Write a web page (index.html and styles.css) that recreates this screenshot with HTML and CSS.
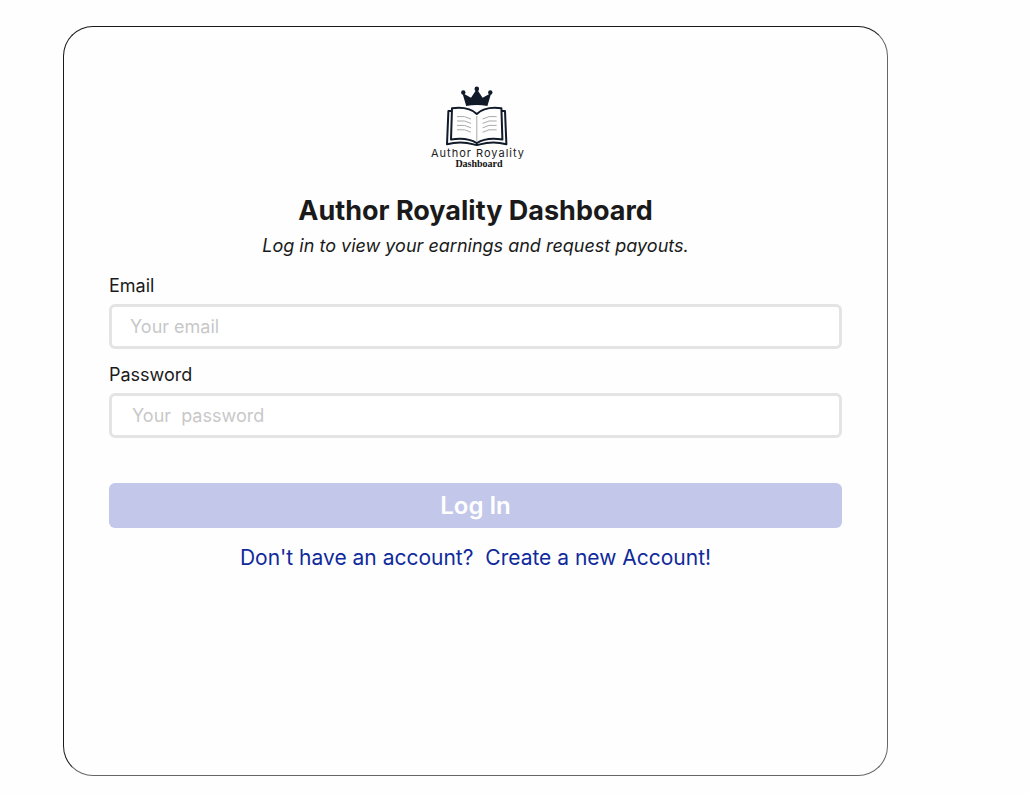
FILE: index.html
```html
<!DOCTYPE html>
<html lang="en">
  <head>
    <meta charset="utf-8" />
    <meta name="viewport" content="width=device-width, initial-scale=1" />
    <title>Author Royality Dashboard</title>
    <link rel="stylesheet" href="styles.css">
  </head>
  <body>
    <main class="login">
      <svg class="login__logo" viewBox="1 0 100 100" role="img" aria-label="Author Royality Dashboard">
        <!-- crown -->
        <g fill="#111a29">
          <circle cx="38.3" cy="17.5" r="2.2" />
          <circle cx="51.8" cy="13.9" r="2.3" />
          <circle cx="65.3" cy="17.5" r="2.2" />
          <path d="M37.4 18 L46 22.8 L51.8 14 L57.6 22.8 L66.2 18 L62.4 31 Q51.8 29.2 41.2 31 Z" />
        </g>
        <!-- book -->
        <g fill="none" stroke="#111a29" stroke-width="2" stroke-linejoin="round">
          <path d="M26.6 36 H23.4 L22 69.2 Q36 65.6 48.6 69.4 Q51.8 70.6 55 69.4 Q67.6 65.6 81.4 69.2 L80 36 H76.8" />
          <path d="M51.8 39 Q44 31.2 27 33.2 L26 64.6 Q42 62 51.8 68.2 Q61.4 62 77.4 64.6 L76.4 33.2 Q59.6 31.2 51.8 39 Z" />
        </g>
        <g fill="none" stroke="#aaa9ab" stroke-width="1">
          <path d="M51.8 41 V66" />
          <path d="M32 41.6 Q40 40.4 46 44" />
          <path d="M32 46 Q40 44.8 46 48.4" />
          <path d="M32 50.4 Q40 49.2 46 52.8" />
          <path d="M32 54.8 Q40 53.6 46 57.2" />
          <path d="M71.6 41.6 Q63.6 40.4 57.6 44" />
          <path d="M71.6 46 Q63.6 44.8 57.6 48.4" />
          <path d="M71.6 50.4 Q63.6 49.2 57.6 52.8" />
          <path d="M71.6 54.8 Q63.6 53.6 57.6 57.2" />
        </g>
        <text class="login__logo-name" x="53" y="82">Author Royality</text>
        <text class="login__logo-sub" x="54" y="92">Dashboard</text>
      </svg>

      <h1 class="login__title">Author Royality Dashboard</h1>
      <p class="login__intro">Log in to view your earnings and request payouts.</p>

      <form class="login__form">
        <label class="login__label" for="email">Email</label>
        <input class="login__input" id="email" type="email" placeholder="Your email">

        <label class="login__label" for="password">Password</label>
        <input class="login__input login__input--password" id="password" type="password" placeholder="Your&nbsp; password">

        <button class="login__button" type="submit">Log In</button>
      </form>

      <a class="login__signup" href="#">Don't have an account?&nbsp; Create a new Account!</a>
    </main>
  </body>
</html>
```
FILE: styles.css
```css
* {
	box-sizing: border-box;
}

body {
	margin: 0;
	padding: 26px 142px 18px 63px;
	background: #fefefe;
	color: #1a1a1a;
	font-family: Inter, sans-serif;
	font-size: 18px;
	line-height: 24px;
}

.login {
	display: flex;
	flex-direction: column;
	align-items: center;
	min-height: 750px;
	padding: 48px 45px;
	border: 1px solid;
	border-color: #1a1a1a #666 #666 #1a1a1a;
	border-radius: 30px;
}

.login__logo {
	width: 100px;
	height: 100px;
}

.login__logo-name {
	fill: #222;
	font-family: Inter, sans-serif;
	font-size: 11px;
	letter-spacing: 1px;
	text-anchor: middle;
}

.login__logo-sub {
	fill: #111;
	font-family: "Liberation Serif", serif;
	font-size: 10px;
	font-weight: 600;
	text-anchor: middle;
}

.login__title {
	margin: 17px 0 4px;
	font-size: 27px;
	line-height: 38px;
}

.login__intro {
	margin: 0;
	font-style: italic;
}

.login__form {
	display: flex;
	flex-direction: column;
	width: 100%;
	margin-top: 16px;
}

.login__label {
	margin-bottom: 6px;
	align-self: flex-start;
}

.login__input {
	width: 100%;
	height: 45px;
	margin-bottom: 14px;
	padding: 0 18px;
	border: 3px solid #e4e4e4;
	border-radius: 6px;
	background: #fff;
	color: #1a1a1a;
	font: inherit;
}

.login__input--password {
	padding-left: 20px;
}

.login__input::placeholder {
	color: #c8c8c8;
	opacity: 1;
}

.login__button {
	width: 100%;
	height: 45px;
	margin-top: 31px;
	border: 0;
	border-radius: 6px;
	background: #c3c8ea;
	color: #fff;
	font-family: inherit;
	font-size: 24px;
	font-weight: 600;
}

.login__signup {
	margin-top: 16px;
	color: #102a9c;
	font-size: 21px;
	line-height: 28px;
	text-decoration: none;
}
```
